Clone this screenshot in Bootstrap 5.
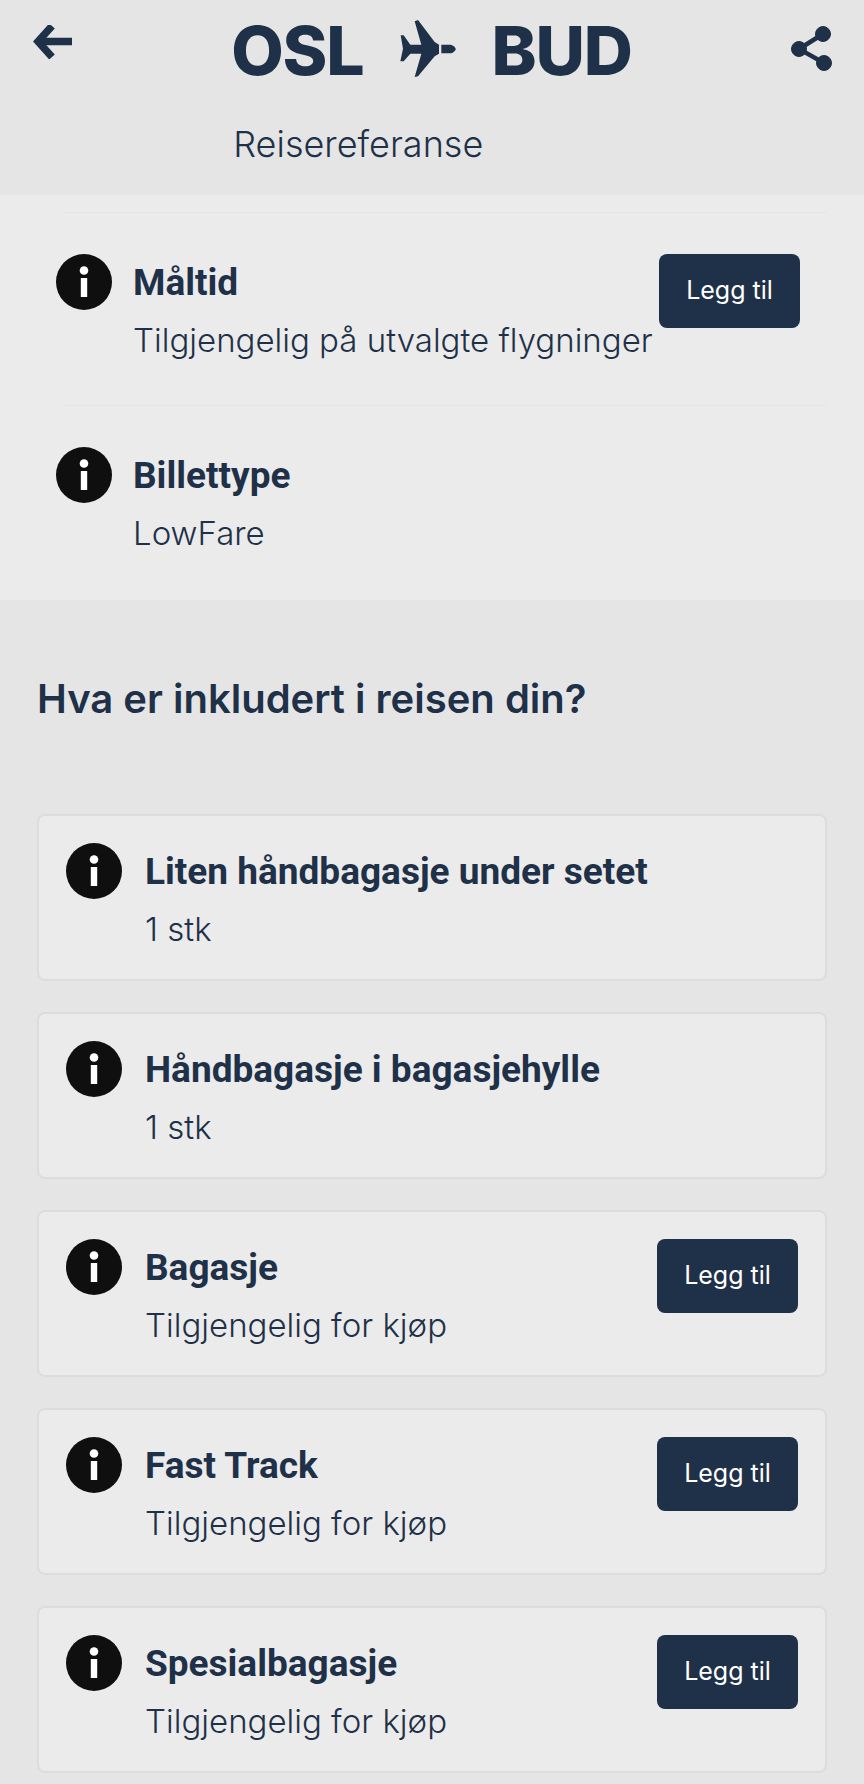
<!doctype html>
<html lang="nb">
<head>
  <meta charset="utf-8">
  <meta name="viewport" content="width=device-width, initial-scale=1">
  <title>OSL - BUD</title>
  <link href="https://cdn.jsdelivr.net/npm/bootstrap@5.3.3/dist/css/bootstrap.min.css" rel="stylesheet">
  <script src="https://cdn.jsdelivr.net/npm/bootstrap@5.3.3/dist/js/bootstrap.bundle.min.js"></script>
  <style>
    body {
      background: #e5e5e5;
      color: #1f3148;
      font-family: Inter, "Liberation Sans", sans-serif;
      overflow: hidden;
    }

    .trip-head {
      height: 195px;
      padding: 25px 32px 0 33px;
    }

    .route-block {
      margin-top: -6px;
    }

    .route-title {
      font-size: 68px;
      font-weight: 800;
      letter-spacing: -1.2px;
      line-height: 58px;
      height: 58px;
      gap: 35px;
    }

    .route-title span {
      position: relative;
      top: 2px;
    }

    .route-ref {
      font-size: 36px;
      font-weight: 300;
      line-height: 40px;
      margin-top: 47px;
      margin-left: 2px;
    }

    .info-panel {
      background: #ebebeb;
      height: 405px;
      padding: 17px 38px 0 64px;
    }

    .info-row {
      border-top: 1px solid #e4e4e4;
      height: 193px;
      padding-top: 41px;
    }

    .info-row .dot-icon {
      margin-left: -8px;
      margin-right: 21px;
    }

    .info-row .add-btn {
      margin-right: 26px;
    }

    .dot-icon {
      width: 56px;
      height: 56px;
      flex: none;
      margin-right: 23px;
    }

    .item-name {
      font-family: Roboto, sans-serif;
      font-weight: 700;
      font-size: 37px;
      line-height: 56px;
      margin-top: 1px;
    }

    .item-sub {
      font-size: 33px;
      font-weight: 300;
      line-height: 36px;
      margin-top: 11px;
      white-space: nowrap;
    }

    .add-btn {
      background: #1f3148;
      color: #fff;
      font-size: 25px;
      font-weight: 400;
      width: 141px;
      height: 74px;
      border-radius: 8px;
      padding: 0;
      flex: none;
      border: 0;
    }

    .add-btn:hover {
      background: #1f3148;
      color: #fff;
    }

    .sect-title {
      font-size: 40px;
      font-weight: 600;
      line-height: 46px;
      margin: 0;
      padding: 76px 0 0 37px;
      height: 214px;
    }

    .incl-list {
      padding: 0 37px 0 37px;
    }

    .incl-card {
      background: #ebebeb;
      border: 2px solid #dcdcdc;
      border-radius: 8px;
      height: 167px;
      margin-bottom: 31px;
      padding: 27px 27px 0 27px;
    }
  </style>
</head>
<body>

<header class="trip-head d-flex justify-content-between align-items-start">
  <svg width="40" height="34" viewBox="0 0 40 34" fill="none" stroke="#1f3148" stroke-width="7.500">
    <path d="M39 16.500H6"/>
    <path d="M19 1L5 16.500 19 32"/>
  </svg>
  <div class="route-block">
    <div class="route-title d-flex align-items-center">
      <span>OSL</span>
      <svg width="58" height="60" viewBox="28 20 174 180" fill="#1f3148">
        <path d="M33 72h9l20 28h33L75 30l10-4 50 66 13 8v27l-13 8-50 60-10 2 20-70H62l-20 23H32l8-38z"/>
        <path d="M155 100h25c10 0 18 8 18 13s-8 13-18 13h-25z"/>
      </svg>
      <span>BUD</span>
    </div>
    <div class="route-ref">Reisereferanse</div>
  </div>
  <svg width="42" height="46" viewBox="0 0 42 46" fill="#1f3148" stroke="#1f3148">
    <path d="M33 9L9 24l25 14" fill="none" stroke-width="4.500"/>
    <circle cx="33" cy="9" r="7.500"/>
    <circle cx="9" cy="24" r="7.500"/>
    <circle cx="34" cy="38" r="7.500"/>
  </svg>
</header>

<section class="info-panel">
  <div class="info-row d-flex align-items-start">
    <svg class="dot-icon" viewBox="0 0 56 56"><circle cx="28" cy="28" r="28" fill="#0f0f0f"/><circle cx="28" cy="16.500" r="4.300" fill="#fff"/><path d="M24.800 24h6.400v19h-6.400z" fill="#fff"/></svg>
    <div class="flex-grow-1">
      <div class="item-name">Måltid</div>
      <div class="item-sub">Tilgjengelig på utvalgte flygninger</div>
    </div>
    <button class="btn add-btn">Legg til</button>
  </div>
  <div class="info-row d-flex align-items-start">
    <svg class="dot-icon" viewBox="0 0 56 56"><circle cx="28" cy="28" r="28" fill="#0f0f0f"/><circle cx="28" cy="16.500" r="4.300" fill="#fff"/><path d="M24.800 24h6.400v19h-6.400z" fill="#fff"/></svg>
    <div class="flex-grow-1">
      <div class="item-name">Billettype</div>
      <div class="item-sub">LowFare</div>
    </div>
  </div>
</section>

<h2 class="sect-title">Hva er inkludert i reisen din?</h2>

<div class="incl-list">
  <div class="incl-card d-flex align-items-start">
    <svg class="dot-icon" viewBox="0 0 56 56"><circle cx="28" cy="28" r="28" fill="#0f0f0f"/><circle cx="28" cy="16.500" r="4.300" fill="#fff"/><path d="M24.800 24h6.400v19h-6.400z" fill="#fff"/></svg>
    <div class="flex-grow-1">
      <div class="item-name">Liten håndbagasje under setet</div>
      <div class="item-sub">1 stk</div>
    </div>
  </div>
  <div class="incl-card d-flex align-items-start">
    <svg class="dot-icon" viewBox="0 0 56 56"><circle cx="28" cy="28" r="28" fill="#0f0f0f"/><circle cx="28" cy="16.500" r="4.300" fill="#fff"/><path d="M24.800 24h6.400v19h-6.400z" fill="#fff"/></svg>
    <div class="flex-grow-1">
      <div class="item-name">Håndbagasje i bagasjehylle</div>
      <div class="item-sub">1 stk</div>
    </div>
  </div>
  <div class="incl-card d-flex align-items-start">
    <svg class="dot-icon" viewBox="0 0 56 56"><circle cx="28" cy="28" r="28" fill="#0f0f0f"/><circle cx="28" cy="16.500" r="4.300" fill="#fff"/><path d="M24.800 24h6.400v19h-6.400z" fill="#fff"/></svg>
    <div class="flex-grow-1">
      <div class="item-name">Bagasje</div>
      <div class="item-sub">Tilgjengelig for kjøp</div>
    </div>
    <button class="btn add-btn">Legg til</button>
  </div>
  <div class="incl-card d-flex align-items-start">
    <svg class="dot-icon" viewBox="0 0 56 56"><circle cx="28" cy="28" r="28" fill="#0f0f0f"/><circle cx="28" cy="16.500" r="4.300" fill="#fff"/><path d="M24.800 24h6.400v19h-6.400z" fill="#fff"/></svg>
    <div class="flex-grow-1">
      <div class="item-name">Fast Track</div>
      <div class="item-sub">Tilgjengelig for kjøp</div>
    </div>
    <button class="btn add-btn">Legg til</button>
  </div>
  <div class="incl-card d-flex align-items-start">
    <svg class="dot-icon" viewBox="0 0 56 56"><circle cx="28" cy="28" r="28" fill="#0f0f0f"/><circle cx="28" cy="16.500" r="4.300" fill="#fff"/><path d="M24.800 24h6.400v19h-6.400z" fill="#fff"/></svg>
    <div class="flex-grow-1">
      <div class="item-name">Spesialbagasje</div>
      <div class="item-sub">Tilgjengelig for kjøp</div>
    </div>
    <button class="btn add-btn">Legg til</button>
  </div>
</div>

</body>
</html>
